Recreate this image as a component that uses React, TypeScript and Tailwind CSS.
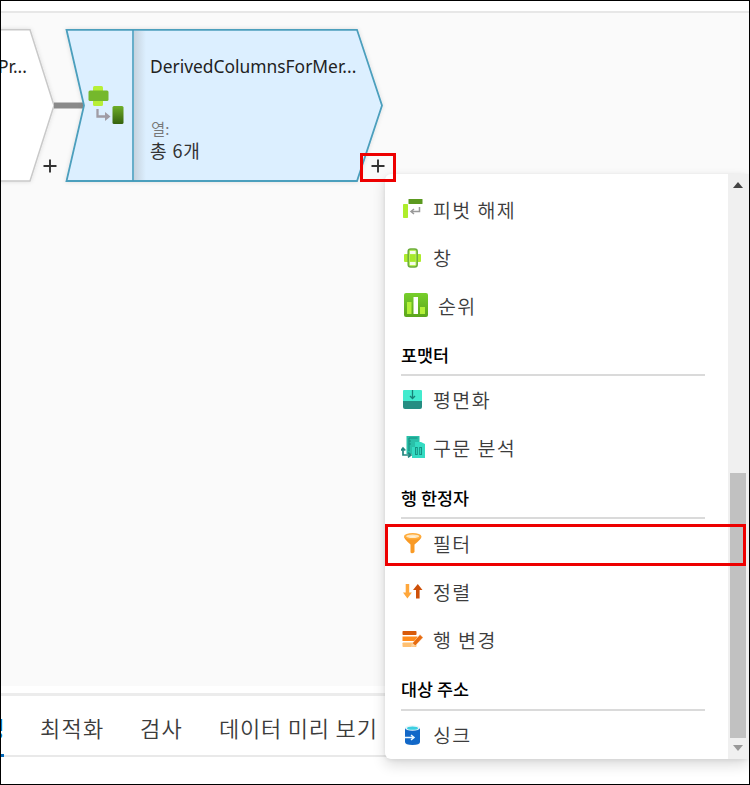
import type { ReactNode } from "react";

const KR = "font-['Noto_Sans_CJK_KR','Noto_Sans',sans-serif]";

function Icon({ children, className }: { children: ReactNode; className?: string }) {
  return (
    <svg viewBox="0 0 24 24" className={`block h-6 w-6 shrink-0 ${className ?? ""}`}>
      {children}
    </svg>
  );
}

function Item({ icon, label, wide }: { icon: ReactNode; label: string; wide?: boolean }) {
  return (
    <li className="flex h-12 items-center pb-0.5 pl-4">
      {icon}
      <span className={`whitespace-nowrap text-[19.5px] font-[350] leading-6 tracking-[1.4px] text-[#3c3c3c] ${wide ? "ml-2.5" : "ml-2"}`}>
        {label}
      </span>
    </li>
  );
}

function Heading({ label, className }: { label: string; className: string }) {
  return (
    <h3 className={`mr-[23px] ml-4 border-b-2 border-[#dadada] text-[17.4px] font-medium leading-6 text-black ${className}`}>
      {label}
    </h3>
  );
}

const UnpivotIcon = (
  <Icon className="mt-0.5">
    <rect x="2" y="5" width="5" height="14" rx=".7" fill="#aeed2b" />
    <rect x="7.500" y="0" width="14" height="5" rx=".5" fill="#5b991f" />
    <path d="M18.500 8v4.500H10m3-2.500-3 2.500 3 2.500" fill="none" stroke="#999" strokeWidth="1.500" />
  </Icon>
);
const WindowIcon = (
  <Icon>
    <rect x="3" y="8" width="17" height="8" rx="1" fill="#aeec2c" />
    <rect x="7.200" y="3" width="9" height="18" rx="2.500" fill="#b8ee55" stroke="#6cad3b" strokeWidth="1.500" />
    <path d="M9 8.500h5.500v7H9z" fill="#a6e92a" />
    <path d="M9 5h5.500v3H9zm0 11h5.500v3H9z" fill="#f5fbed" />
  </Icon>
);
const RankIcon = (
  <Icon className="-mt-0.5 ml-[3px]">
    <defs><linearGradient id="rank" x2="0" y2="1"><stop stopColor="#77cf2b" /><stop offset="1" stopColor="#5ba51c" /></linearGradient></defs>
    <rect x="0" y="0" width="24" height="24" rx="2" fill="url(#rank)" />
    <path d="M3 9h4.500v12H3zm13 5h5v7h-5z" fill="#b3f038" />
    <path d="M9.500 4h4.500v17H9.500z" fill="#fff" />
  </Icon>
);
const FlattenIcon = (
  <Icon className="-mt-0.5">
    <path d="M3 3h17q1 0 1 1v10H2V4q0-1 1-1Z" fill="#43ebce" />
    <path d="M2 14h19v6q0 2-2 2H4q-2 0-2-2Z" fill="#258d82" />
    <path d="M11.500 3v8.500M9 9l2.500 2.500L14 9" fill="none" stroke="#168277" strokeWidth="1.300" />
  </Icon>
);
const ParseIcon = (
  <Icon className="-mt-0.5">
    <path d="M5.500 1h13v18h-13z" fill="#2ac0a9" />
    <path d="M8 3h8.500M8 3v13M8 6h2M8 9h2" fill="none" stroke="#198b7f" strokeWidth="1.100" />
    <path d="M11 12h3V7h6l4 2v14H11z" fill="#34dbc2" />
    <rect x="14.500" y="12.500" width="1.800" height="7" fill="none" stroke="#159383" strokeWidth="1" />
    <rect x="18.700" y="12.500" width="1.800" height="7" fill="none" stroke="#159383" strokeWidth="1" />
    <path d="M2 14v6h7M0 15.500 2 13l2.300 2.500M7 17.700l3 2.300-3 2.300" fill="none" stroke="#21867f" strokeWidth="1.700" />
  </Icon>
);
const FilterIcon = (
  <Icon className="-mt-0.5">
    <path d="M3 5.500q0 2.500 6.500 8V21q0 1.200 1.500 1.200t2.500-1.200v-7.500Q20.500 8 20.500 5.500Z" fill="#f99a25" />
    <ellipse cx="11.700" cy="5.300" rx="8.700" ry="3.300" fill="#ffac3c" />
    <ellipse cx="11.700" cy="5.300" rx="6.500" ry="1.800" fill="#ffe6bd" />
    <path d="M8 6.200q4-2 7.500 0" fill="#fff7e5" />
  </Icon>
);
const SortIcon = (
  <Icon>
    <path d="M4.700 4h3.500v8.500h2.700L6.400 18.500 2 12.500h2.700Z" fill="#ffa73b" />
    <path d="M15 18.500V10h-3l4.800-6 4.700 6h-2.900v8.500Z" fill="#ce5009" />
  </Icon>
);
const AlterIcon = (
  <Icon>
    <rect x="1.500" y="3" width="14" height="4" rx=".7" fill="#d85b0b" />
    <rect x="1.500" y="8.500" width="15" height="4.500" fill="#ff8c1c" />
    <rect x="1.500" y="14.500" width="14" height="4.500" rx=".7" fill="#ffc071" />
    <path d="m11.500 15 7.500-8.500 3 3-7.500 8-4 1.500Z" fill="#e76c10" stroke="#fff" strokeWidth=".4" />
    <path d="m11.500 15 3 2.500-4 1.500Z" fill="#ffd59b" />
  </Icon>
);
const SinkIcon = (
  <Icon>
    <path d="M4 5v14q0 3 7.500 3t7.500-3V5Z" fill="#1268c8" />
    <ellipse cx="11.500" cy="5" rx="7.500" ry="2.700" fill="#e7f5fa" />
    <ellipse cx="11.500" cy="5.200" rx="5.500" ry="1.600" fill="#3ccfe1" />
    <path d="M4 14.500h8M10 12l3 2.500-3 2.500" fill="none" stroke="#eef9ff" strokeWidth="1.500" />
  </Icon>
);

function Plus({ className }: { className: string }) {
  return (
    <svg viewBox="0 0 14 14" className={`absolute h-3.5 w-3.5 ${className}`}>
      <path d="M7 .5v13M.5 7h13" stroke="#333" strokeWidth="1.900" />
    </svg>
  );
}

function Diagram() {
  return (
    <div className="relative h-[673px] bg-[#fafafa]">
      <svg viewBox="0 0 400 200" className="absolute top-0 left-0 h-[200px] w-[400px]">
        <defs>
          <linearGradient id="divider"><stop stopColor="#c6d3de" /><stop offset="1" stopColor="#dcefff" /></linearGradient>
          <linearGradient id="cell" x2="0" y2="1"><stop stopColor="#6eae28" /><stop offset="1" stopColor="#35620e" /></linearGradient>
          <filter id="soft" x="-10%" y="-10%" width="120%" height="120%"><feDropShadow dx="0" dy="0" stdDeviation="2" floodOpacity=".12" /></filter>
        </defs>
        <g transform="translate(-1 -13)">
          <path d="M-10 29.700H30L54 105.500 30 181H-10Z" fill="#fff" stroke="#c9c9c9" strokeWidth="1.500" filter="url(#soft)" />
          <path d="M54 105.500h30" stroke="#8a8a8a" strokeWidth="6" />
          <path d="M66.500 29.800H357L382 105.500 357 181H66.500L84 105.500Z" fill="#dcefff" stroke="#4c9fbd" strokeWidth="1.800" filter="url(#soft)" />
          <path d="M134 31h12v149h-12z" fill="url(#divider)" />
          <path d="M133 30v151" stroke="#4099b8" strokeWidth="1.500" />
          <rect x="93" y="86" width="10" height="20" rx="1.500" fill="#b7ef36" />
          <rect x="88.500" y="90.500" width="20" height="10.500" rx="1.500" fill="#75b82c" />
          <path d="M97.500 109v7.500h9" fill="none" stroke="#a09ca5" strokeWidth="2.300" />
          <path d="m105 112 5.500 4.500-5.500 4.500Z" fill="#a09ca5" />
          <rect x="112.500" y="106" width="11" height="18" rx="1.500" fill="url(#cell)" />
        </g>
      </svg>
      <span className="absolute top-[39px] -left-[3px] font-['Noto_Sans',sans-serif] text-[17.4px] leading-7 text-[#222]">Pr...</span>
      <span className="absolute top-[39px] left-[149px] whitespace-nowrap font-['Noto_Sans',sans-serif] text-[17.4px] leading-7 text-[#222]">DerivedColumnsForMer...</span>
      <span className="absolute top-[105px] left-[150px] text-[15.5px] font-[350] leading-5 text-[#777]">열:</span>
      <span className="absolute top-[125px] left-[149px] whitespace-nowrap text-[18px] leading-6 tracking-[.9px] text-[#333]">총 6개</span>
      <Plus className="top-[146px] left-[42px]" />
      <Plus className="top-[146px] left-[370px]" />
    </div>
  );
}

function Menu() {
  return (
    <div className="absolute top-[173px] left-[384px] flex h-[585px] w-[364px] rounded-md bg-white shadow-[0_6px_14px_rgba(0,0,0,.14),0_1px_4px_rgba(0,0,0,.08)]">
      <div className="min-w-0 flex-1 pt-[13px]">
        <ul><Item icon={UnpivotIcon} label="피벗 해제" /><Item icon={WindowIcon} label="창" /><Item icon={RankIcon} label="순위" wide /></ul>
        <Heading label="포맷터" className="mb-px h-[45px] pt-3" />
        <ul><Item icon={FlattenIcon} label="평면화" /><Item icon={ParseIcon} label="구문 분석" /></ul>
        <Heading label="행 한정자" className="mb-0.5 h-[46px] pt-[13px]" />
        <ul><Item icon={FilterIcon} label="필터" /><Item icon={SortIcon} label="정렬" /><Item icon={AlterIcon} label="행 변경" /></ul>
        <Heading label="대상 주소" className="mb-px h-[46px] pt-3" />
        <ul><Item icon={SinkIcon} label="싱크" /></ul>
      </div>
      <div className="flex w-[21px] flex-col items-center bg-[#f0f0f0] pr-px">
        <svg viewBox="0 0 10 6" className="mt-2 h-1.5 w-2.5 shrink-0"><path d="M0 6 5 0l5 6Z" fill="#444" /></svg>
        <div className="mt-[285px] h-[265px] w-4 shrink-0 bg-[#c1c1c1]" />
        <svg viewBox="0 0 10 6" className="mt-[7px] h-1.5 w-2.5 shrink-0"><path d="M0 0h10L5 6Z" fill="#999" /></svg>
      </div>
    </div>
  );
}

export default function App() {
  return (
    <main className={`relative h-[785px] w-[750px] overflow-hidden border border-black bg-white ${KR}`}>
      <div className="h-3 border-b-2 border-[#e7e7e7]" />
      <Diagram />
      <section className="mt-[7px] border-t-3 border-[#ececec]">
        <nav className="relative flex h-[61px] items-center border-b-2 border-[#e9e9e9] pt-[3px] text-[22px] font-[350] leading-8 text-[#3c3c3c]">
          <span className="absolute left-[-16.5px] text-[#0067b8]">정</span>
          <span className="absolute bottom-[-2px] left-0 h-[3px] w-[3px] bg-[#0067b8]" />
          <span className="ml-[39px] w-[100px] shrink-0 tracking-[1.2px]">최적화</span>
          <span className="w-[79px] shrink-0 tracking-[1.2px]">검사</span>
          <span className="whitespace-nowrap tracking-[.8px]">데이터 미리 보기</span>
        </nav>
      </section>
      <Menu />
      <div className="absolute top-[152px] left-[359px] h-[29px] w-[36px] border-3 border-[#ed0000]" />
      <div className="absolute top-[523px] left-[384px] h-[42px] w-[361px] border-3 border-[#ed0000]" />
    </main>
  );
}
